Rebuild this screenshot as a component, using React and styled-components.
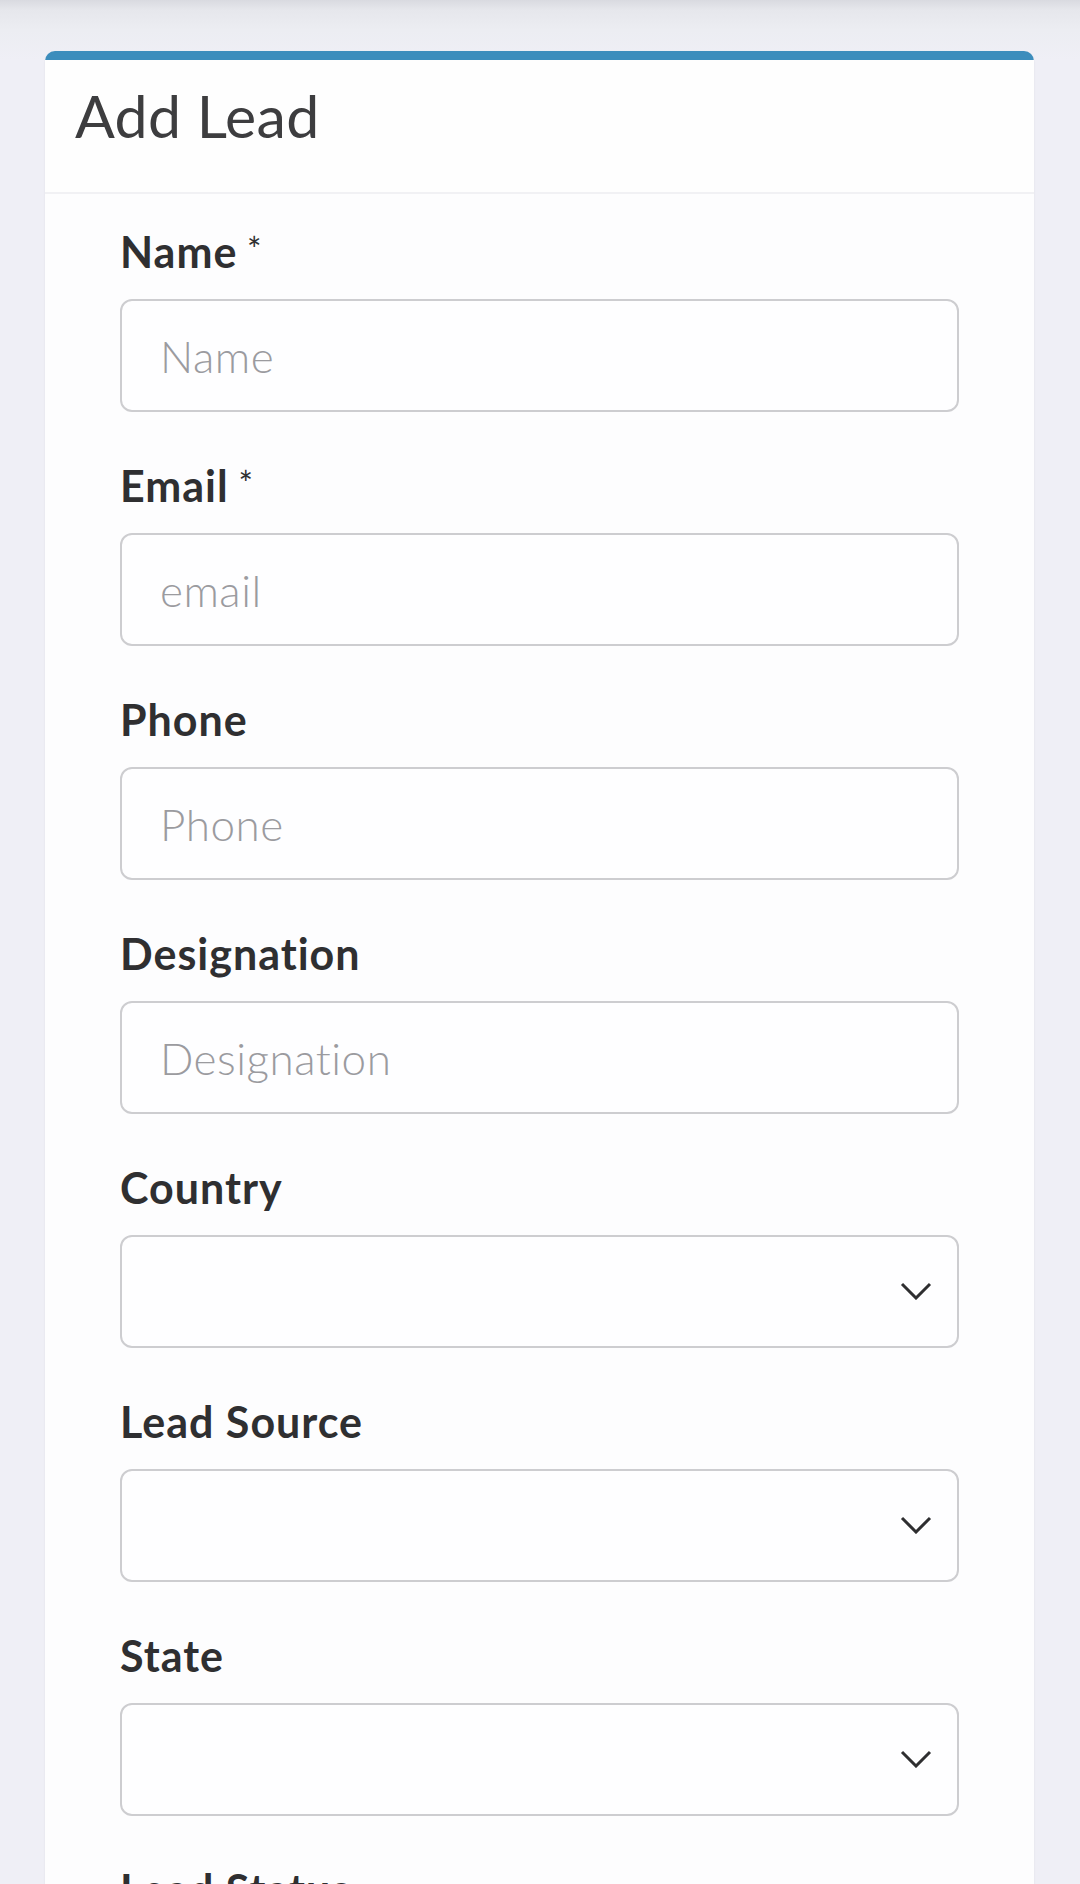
import React from 'react';
import styled, { createGlobalStyle } from 'styled-components';

// ─── Data ───────────────────────────────────────────────────────────────
const FIELDS = [
  { label: 'Name', required: true, placeholder: 'Name' },
  { label: 'Email', required: true, placeholder: 'email' },
  { label: 'Phone', placeholder: 'Phone' },
  { label: 'Designation', placeholder: 'Designation' },
  { label: 'Country', select: true },
  { label: 'Lead Source', select: true },
  { label: 'State', select: true },
  { label: 'Lead Status', select: true },
  { label: 'Notes', placeholder: 'Notes' },
];

const Chevron = () => (
  <ChevronIcon viewBox="0 0 32 18" width="32" height="18">
    <path d="M2 2 L16 16 L30 2" fill="none" stroke="#2e2e30" strokeWidth="3" />
  </ChevronIcon>
);

const App = () => (
  <>
    <GlobalStyle />
    <Page>
      <Card>
        <CardHeader>
          <Title>Add Lead</Title>
        </CardHeader>
        <CardBody>
          {FIELDS.map((f) => (
            <Field key={f.label}>
              <Label>
                {f.label}
                {f.required && <Req> *</Req>}
              </Label>
              {f.select ? (
                <SelectWrap>
                  <Select defaultValue="">
                    <option value="" />
                  </Select>
                  <Chevron />
                </SelectWrap>
              ) : (
                <Input placeholder={f.placeholder} />
              )}
            </Field>
          ))}
        </CardBody>
      </Card>
    </Page>
  </>
);

export default App;

// ─── Styles ───────────────────────────────────────────────────────────────
const GlobalStyle = createGlobalStyle`
  * { box-sizing: border-box; }
  body {
    margin: 0;
    font-family: Lato, "Open Sans", Arial, sans-serif;
    background: #efeff6;
  }
`;

const Page = styled.div`
  min-height: 1884px;
  padding: 51px 46px 0 45px;
  background: linear-gradient(#d9dae0 0, #e6e7ec 10px, #ecedf2 30px, #efeff6 60px) no-repeat;
  background-size: 100% 60px;
  background-color: #efeff6;
`;

const Card = styled.div`
  background: #fdfdfe;
  border-top: 9px solid #3c8dbc;
  border-radius: 10px 10px 0 0;
  box-shadow: 0 1px 2px rgba(0, 0, 0, 0.08);
`;

const CardHeader = styled.div`
  padding: 21px 26px 42px 30px;
  background: #fefefe;
  border-bottom: 2px solid #f1f1f4;
`;

const Title = styled.h3`
  margin: 0;
  font-size: 59px;
  line-height: 69px;
  font-weight: 400;
  letter-spacing: 0.3px;
  color: #3d3d3f;
`;

const CardBody = styled.div`
  padding: 30px 75px 40px 75px;
`;

const Field = styled.div`
  display: flex;
  flex-direction: column;
  gap: 19px;
  margin-bottom: 46px;
`;

const Label = styled.label`
  font-size: 43px;
  line-height: 56px;
  height: 56px;
  font-weight: 700;
  letter-spacing: 1px;
  color: #2f2f31;
`;

const Req = styled.span`
  font-weight: 400;
  font-size: 34px;
  line-height: 0;
  vertical-align: 6px;
`;

const fieldBase = `
  width: 100%;
  height: 113px;
  border: 2px solid #cdcdd0;
  border-radius: 12px;
  background: #fefeff;
  font-family: Lato, "Open Sans", Arial, sans-serif;
  font-size: 44px;
  color: #333;
  outline: none;
`;

const Input = styled.input`
  ${fieldBase}
  padding: 0 38px;
  font-weight: 300;
  letter-spacing: 0.5px;
  &::placeholder { color: #9b9b9f; font-weight: 300; }
`;

const SelectWrap = styled.div`
  position: relative;
`;

const Select = styled.select`
  ${fieldBase}
  appearance: none;
  padding: 0 80px 0 38px;
`;

const ChevronIcon = styled.svg`
  position: absolute;
  right: 27px;
  top: 47px;
  pointer-events: none;
`;
